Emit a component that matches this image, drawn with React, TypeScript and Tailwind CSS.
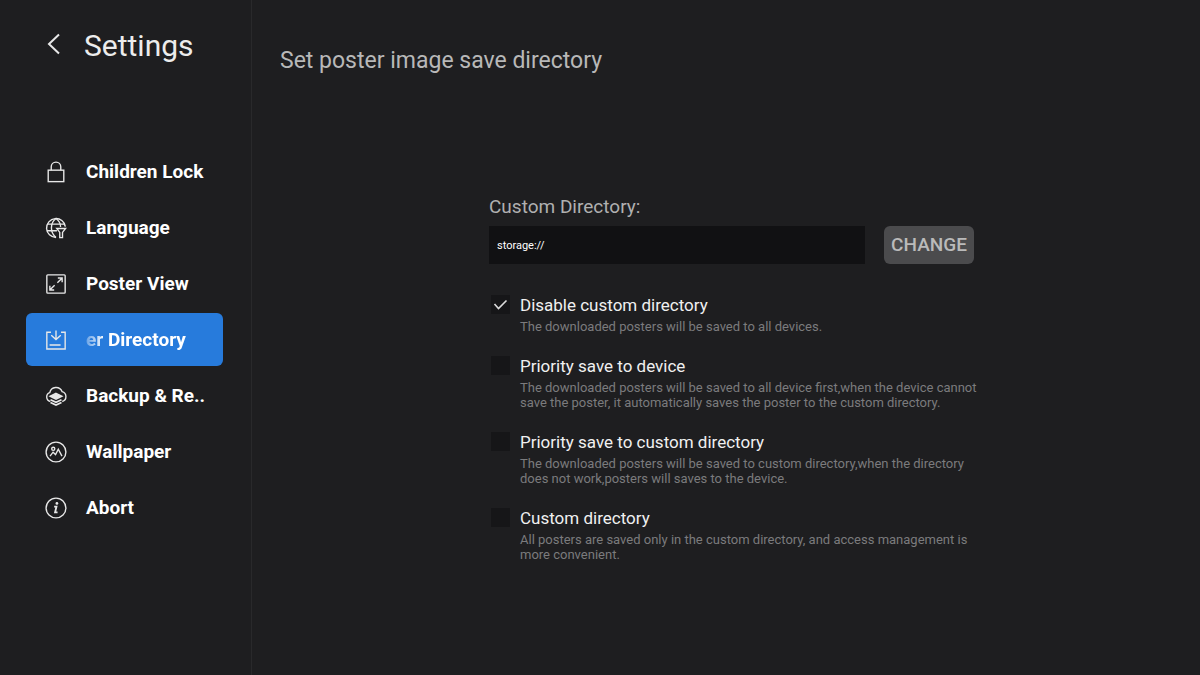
import { useState } from "react";
import type { ReactNode } from "react";

const menu: { label: string; icon: ReactNode }[] = [
  {
    label: "Children Lock",
    icon: (
      <>
        <rect x="3.500" y="10" width="17" height="12.500" />
        <path d="M6.800 10V6.400a5.200 5.200 0 0 1 10.400 0V10" />
      </>
    ),
  },
  {
    label: "Language",
    icon: (
      <>
        <path d="M12 22.300A10.300 10.300 0 1 1 22.200 10.500" />
        <path d="M12 22.300C8.600 19.500 7 16 7 12s1.800-8 5-10.300c3.200 2.300 5 5.500 5 9.300" />
        <path d="M2.800 7.800h18.400M2 15h11" />
        <path d="M12.800 12.500h9.700l-3.400 4.300v5.700h-3v-5.700z" />
      </>
    ),
  },
  {
    label: "Poster View",
    icon: (
      <>
        <rect x="2" y="2" width="20" height="20" rx="1" />
        <path d="M14 5.500h4.700v4.700M18.500 5.700l-5 5M10 18.500H5.300v-4.700M5.500 18.300l5-5" />
      </>
    ),
  },
  {
    label: "er Directory",
    icon: (
      <>
        <path d="M6.500 3.500H2v18.300h20V3.500h-4.500" />
        <path d="M12 1.500V11M6.800 6.800 12 11.500l5.200-4.700M5 17.500h12" />
      </>
    ),
  },
  {
    label: "Backup & Re..",
    icon: (
      <>
        <path d="M5.800 18a5 5 0 0 1-.6-9.600 7 7 0 0 1 13.400-1.200A5.600 5.600 0 0 1 18.800 18" />
        <path d="m12 9 6.500 3.200-6.500 3.200-6.500-3.200z" fill="currentColor" />
        <path d="m6 16 6 2.800 6-2.800M6 19l6 2.800 6-2.800" strokeWidth="1.800" />
      </>
    ),
  },
  {
    label: "Wallpaper",
    icon: (
      <>
        <circle cx="12" cy="12" r="10.800" />
        <circle cx="9" cy="8.500" r="1.700" />
        <path d="m5.500 16.500 3.300-4.300 2.700 2.600 3-5.800 4 7.500" />
      </>
    ),
  },
  {
    label: "Abort",
    icon: (
      <>
        <circle cx="12" cy="12" r="10.800" />
        <path d="M10 10.500h2.500L11 16.800h2.700" strokeWidth="2" />
        <circle cx="13" cy="7" r="1.500" fill="currentColor" stroke="none" />
      </>
    ),
  },
];

const options = [
  {
    id: "disable",
    title: "Disable custom directory",
    text: "The downloaded posters will be saved to all devices.",
  },
  {
    id: "device",
    title: "Priority save to device",
    text: "The downloaded posters will be saved to all device first,when the device cannot save the poster, it automatically saves the poster to the custom directory.",
  },
  {
    id: "priority-custom",
    title: "Priority save to custom directory",
    text: "The downloaded posters will be saved to custom directory,when the directory does not work,posters will saves to the device.",
  },
  {
    id: "custom",
    title: "Custom directory",
    text: "All posters are saved only in the custom directory, and access management is more convenient.",
  },
];

export default function App() {
  const [active, setActive] = useState(3);
  const [selected, setSelected] = useState("disable");
  const [path, setPath] = useState("storage://");

  return (
    <div className="flex min-h-screen bg-[#1e1e20] font-['Roboto',sans-serif] text-white">
      <aside className="w-[252px] shrink-0 border-r border-[#29292b] pt-6 pr-7 pl-[26px]">
        <div className="flex items-center gap-[22px] pl-5">
          <button type="button" aria-label="Back" className="pb-1">
            <svg viewBox="0 0 16 24" className="h-6 w-4" fill="none" stroke="#e8e8e8" strokeWidth="2">
              <path d="M13 2.500 3 12l10 9.500" />
            </svg>
          </button>
          <h1 className="text-[30px] leading-[44px] text-[#ececec]">Settings</h1>
        </div>
        <nav className="mt-[77px] flex flex-col gap-[3px]">
          {menu.map((item, index) => (
            <button
              key={item.label}
              type="button"
              onClick={() => setActive(index)}
              className={`flex h-[53px] items-center gap-[19px] rounded-md pl-[19px] text-left ${
                index === active ? "bg-[#277bdc]" : ""
              }`}
            >
              <svg
                viewBox="0 0 24 24"
                className="size-[22px] shrink-0"
                fill="none"
                stroke="#e8e8e8"
                strokeWidth="1.500"
                color="#e8e8e8"
              >
                {item.icon}
              </svg>
              <span
                className={`text-[19px] leading-6 font-bold whitespace-nowrap ${
                  index === active ? "mask-[linear-gradient(to_right,rgb(0_0_0/0.3),black_18px)]" : ""
                }`}
              >
                {item.label}
              </span>
            </button>
          ))}
        </nav>
      </aside>

      <main className="flex-1 pt-[45px] pl-7">
        <h2 className="text-[23px] leading-8 text-[#b8b8b8]">Set poster image save directory</h2>
        <form className="mx-auto mt-[118px] w-[502px]" onSubmit={(e) => e.preventDefault()}>
          <label htmlFor="directory" className="block text-[19px] leading-6 text-[#b0b0b0]">
            Custom Directory:
          </label>
          <div className="mt-[7px] flex gap-[19px]">
            <input
              id="directory"
              type="text"
              value={path}
              onChange={(e) => setPath(e.target.value)}
              className="h-[38px] w-[376px] bg-[#111113] px-2 text-[11px] text-white outline-none"
            />
            <button type="button" className="h-[38px] w-[90px] rounded-md bg-[#4b4b4d] text-[19px] font-medium text-[#bababa]">
              CHANGE
            </button>
          </div>
          <div className="mt-[27px] flex flex-col gap-[18px]">
            {options.map((option) => (
              <div key={option.id} className="flex gap-[10px]">
                <span className="relative mt-1 ml-0.5 size-[19px] shrink-0">
                  <input
                    id={option.id}
                    type="checkbox"
                    checked={selected === option.id}
                    onChange={() => setSelected(option.id)}
                    className="peer block size-[19px] appearance-none bg-[#161618]"
                  />
                  <svg
                    viewBox="0 0 19 19"
                    className="pointer-events-none absolute inset-0 hidden peer-checked:block"
                    fill="none"
                    stroke="#dcdcdc"
                    strokeWidth="1.600"
                  >
                    <path d="m3.500 9 4 4.500 8-8" />
                  </svg>
                </span>
                <div>
                  <label htmlFor={option.id} className="block text-[17px] leading-7 text-[#f0f0f0]">
                    {option.title}
                  </label>
                  <p className="text-[13px] leading-[15px] text-[#7b7b7d]">{option.text}</p>
                </div>
              </div>
            ))}
          </div>
        </form>
      </main>
    </div>
  );
}
